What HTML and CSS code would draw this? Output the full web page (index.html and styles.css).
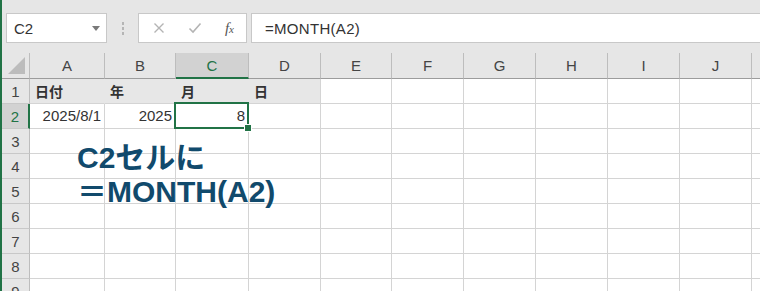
FILE: index.html
```html
<!DOCTYPE html>
<html>
<head>
    <link rel="stylesheet" href="styles.css">
</head>
<body>

<div class="window">
    <!-- Formula bar area -->
    <div class="toolbar">
        <div class="namebox">
            <span>C2</span>
            <svg class="drop" width="8" height="5" viewBox="0 0 8 5"><path d="M0 0h8L4 5z" fill="#7a7a7a"/></svg>
        </div>
        <div class="grip"><i></i><i></i><i></i></div>
        <div class="fxbox">
            <svg width="12" height="12" viewBox="0 0 12 12"><path d="M1.5 1.5l9 9M10.5 1.5l-9 9" stroke="#b4b4b4" stroke-width="1.4"/></svg>
            <svg width="14" height="12" viewBox="0 0 14 12"><path d="M1.5 6.5l3.5 3.5 7.5-8.5" stroke="#b4b4b4" stroke-width="1.6" fill="none"/></svg>
            <span class="fx">f<small>x</small></span>
        </div>
        <div class="formula">=MONTH(A2)</div>
    </div>

    <!-- Sheet grid -->
    <div class="sheet">
        <div class="corner"><svg width="18" height="18" viewBox="0 0 18 18"><path d="M17 0v17H0z" fill="#bcbcbc"/></svg></div>
        <div class="colhead">A</div>
        <div class="colhead">B</div>
        <div class="colhead active">C</div>
        <div class="colhead">D</div>
        <div class="colhead">E</div>
        <div class="colhead">F</div>
        <div class="colhead">G</div>
        <div class="colhead">H</div>
        <div class="colhead">I</div>
        <div class="colhead">J</div>
        <div class="colhead"></div>

        <div class="rowhead">1</div>
        <div class="cell title">日付</div>
        <div class="cell title">年</div>
        <div class="cell title">月</div>
        <div class="cell title last">日</div>
        <div class="cell"></div><div class="cell"></div><div class="cell"></div><div class="cell"></div><div class="cell"></div><div class="cell"></div><div class="cell"></div>

        <div class="rowhead active">2</div>
        <div class="cell num">2025/8/1</div>
        <div class="cell num">2025</div>
        <div class="cell num selected">8<span class="handle"></span></div>
        <div class="cell"></div><div class="cell"></div><div class="cell"></div><div class="cell"></div><div class="cell"></div><div class="cell"></div><div class="cell"></div><div class="cell"></div>
    </div>

    <div class="note">C2セルに<br>＝MONTH(A2)</div>
</div>

<script>
// empty rows 3-9
var sheet = document.querySelector('.sheet');
for (var r = 3; r <= 9; r++) {
    var html = '<div class="rowhead">' + r + '</div>';
    for (var c = 0; c < 11; c++) {
        html += '<div class="cell"></div>';
    }
    sheet.insertAdjacentHTML('beforeend', html);
}
</script>

</body>
</html>
```

FILE: styles.css
```css
body {
    margin: 0;
    font-family: 'Liberation Sans', 'Noto Sans CJK JP', sans-serif;
    color: #333;
    background-color: #fff;
}

.window {
    position: relative;
    width: 760px;
    height: 291px;
    overflow: hidden;
    border-left: 2px solid #217346;
    box-sizing: border-box;
}

.toolbar {
    display: flex;
    align-items: stretch;
    height: 53px;
    padding: 13px 0 10px 4px;
    box-sizing: border-box;
    background-color: #e6e6e6;
}

.namebox {
    width: 101px;
    display: flex;
    align-items: center;
    justify-content: space-between;
    padding: 0 6px 0 7px;
    box-sizing: border-box;
    background-color: #fff;
    border: 1px solid #c8c8c8;
    font-size: 15px;
}

.grip {
    width: 31px;
    display: flex;
    flex-direction: column;
    align-items: center;
    justify-content: center;
    gap: 2px;
}

.grip i {
    width: 2px;
    height: 3px;
    background-color: #b5b5b5;
}

.fxbox {
    width: 109px;
    display: flex;
    align-items: center;
    justify-content: space-between;
    padding: 0 12px 0 14px;
    box-sizing: border-box;
    background-color: #fff;
    border: 1px solid #c8c8c8;
}

.fx {
    font-family: 'Liberation Serif', serif;
    font-style: italic;
    font-size: 15px;
    color: #555;
}

.fx small {
    font-size: 11px;
}

.formula {
    flex: 1;
    margin-left: 4px;
    padding-left: 13px;
    display: flex;
    align-items: center;
    background-color: #fff;
    border: 1px solid #c8c8c8;
    border-right: none;
    font-size: 15px;
    letter-spacing: 0.3px;
}

.sheet {
    display: grid;
    grid-template-columns: 28px 75px 71px 73px 72px 71px 72px 72px 72px 72px 72px 30px;
    grid-auto-rows: 25px;
    grid-template-rows: 26px;
}

.sheet > div {
    box-sizing: border-box;
    border-right: 1px solid #d4d4d4;
    border-bottom: 1px solid #d4d4d4;
}

.corner {
    background-color: #e6e6e6;
    display: flex;
    align-items: flex-end;
    justify-content: flex-end;
    padding: 0 3px 3px 0;
    border-bottom-color: #9c9c9c !important;
    border-right-color: #bdbdbd !important;
}

.colhead {
    background-color: #e6e6e6;
    border-right-color: #bdbdbd !important;
    border-bottom-color: #9c9c9c !important;
    text-align: center;
    font-size: 15px;
    line-height: 26px;
    color: #444;
}

.colhead.active {
    background-color: #d2d2d2;
    color: #217346;
    border-bottom: 2px solid #217346 !important;
}

.rowhead {
    background-color: #e6e6e6;
    border-right-color: #bdbdbd !important;
    border-bottom-color: #c8c8c8 !important;
    text-align: center;
    font-size: 15px;
    line-height: 25px;
    color: #444;
}

.rowhead.active {
    background-color: #d2d2d2;
    color: #217346;
    border-right: 2px solid #217346 !important;
}

.cell {
    font-size: 15px;
    line-height: 24px;
    padding: 0 4px;
    white-space: nowrap;
}

.cell.title {
    background-color: #e7e7e7;
    border-right-color: #e7e7e7 !important;
    font-weight: bold;
    font-family: 'Noto Sans CJK JP', sans-serif;
    font-size: 14px;
    padding-left: 5px;
}

.cell.title.last {
    border-right-color: #d4d4d4 !important;
}

.cell.num {
    text-align: right;
    padding-right: 3px;
}

.cell.selected {
    position: relative;
}

.cell.selected::after {
    content: '';
    position: absolute;
    left: -2px;
    top: -2px;
    right: -1px;
    bottom: -1px;
    border: 2px solid #217346;
}

.handle {
    position: absolute;
    right: -4px;
    bottom: -4px;
    width: 6px;
    height: 6px;
    background-color: #217346;
    border: 1px solid #fff;
    z-index: 2;
}

.note {
    position: absolute;
    left: 75px;
    top: 141px;
    font-family: 'Liberation Sans', 'Noto Sans CJK JP', sans-serif;
    font-weight: bold;
    font-size: 30px;
    line-height: 34px;
    color: #114a6c;
}
```
